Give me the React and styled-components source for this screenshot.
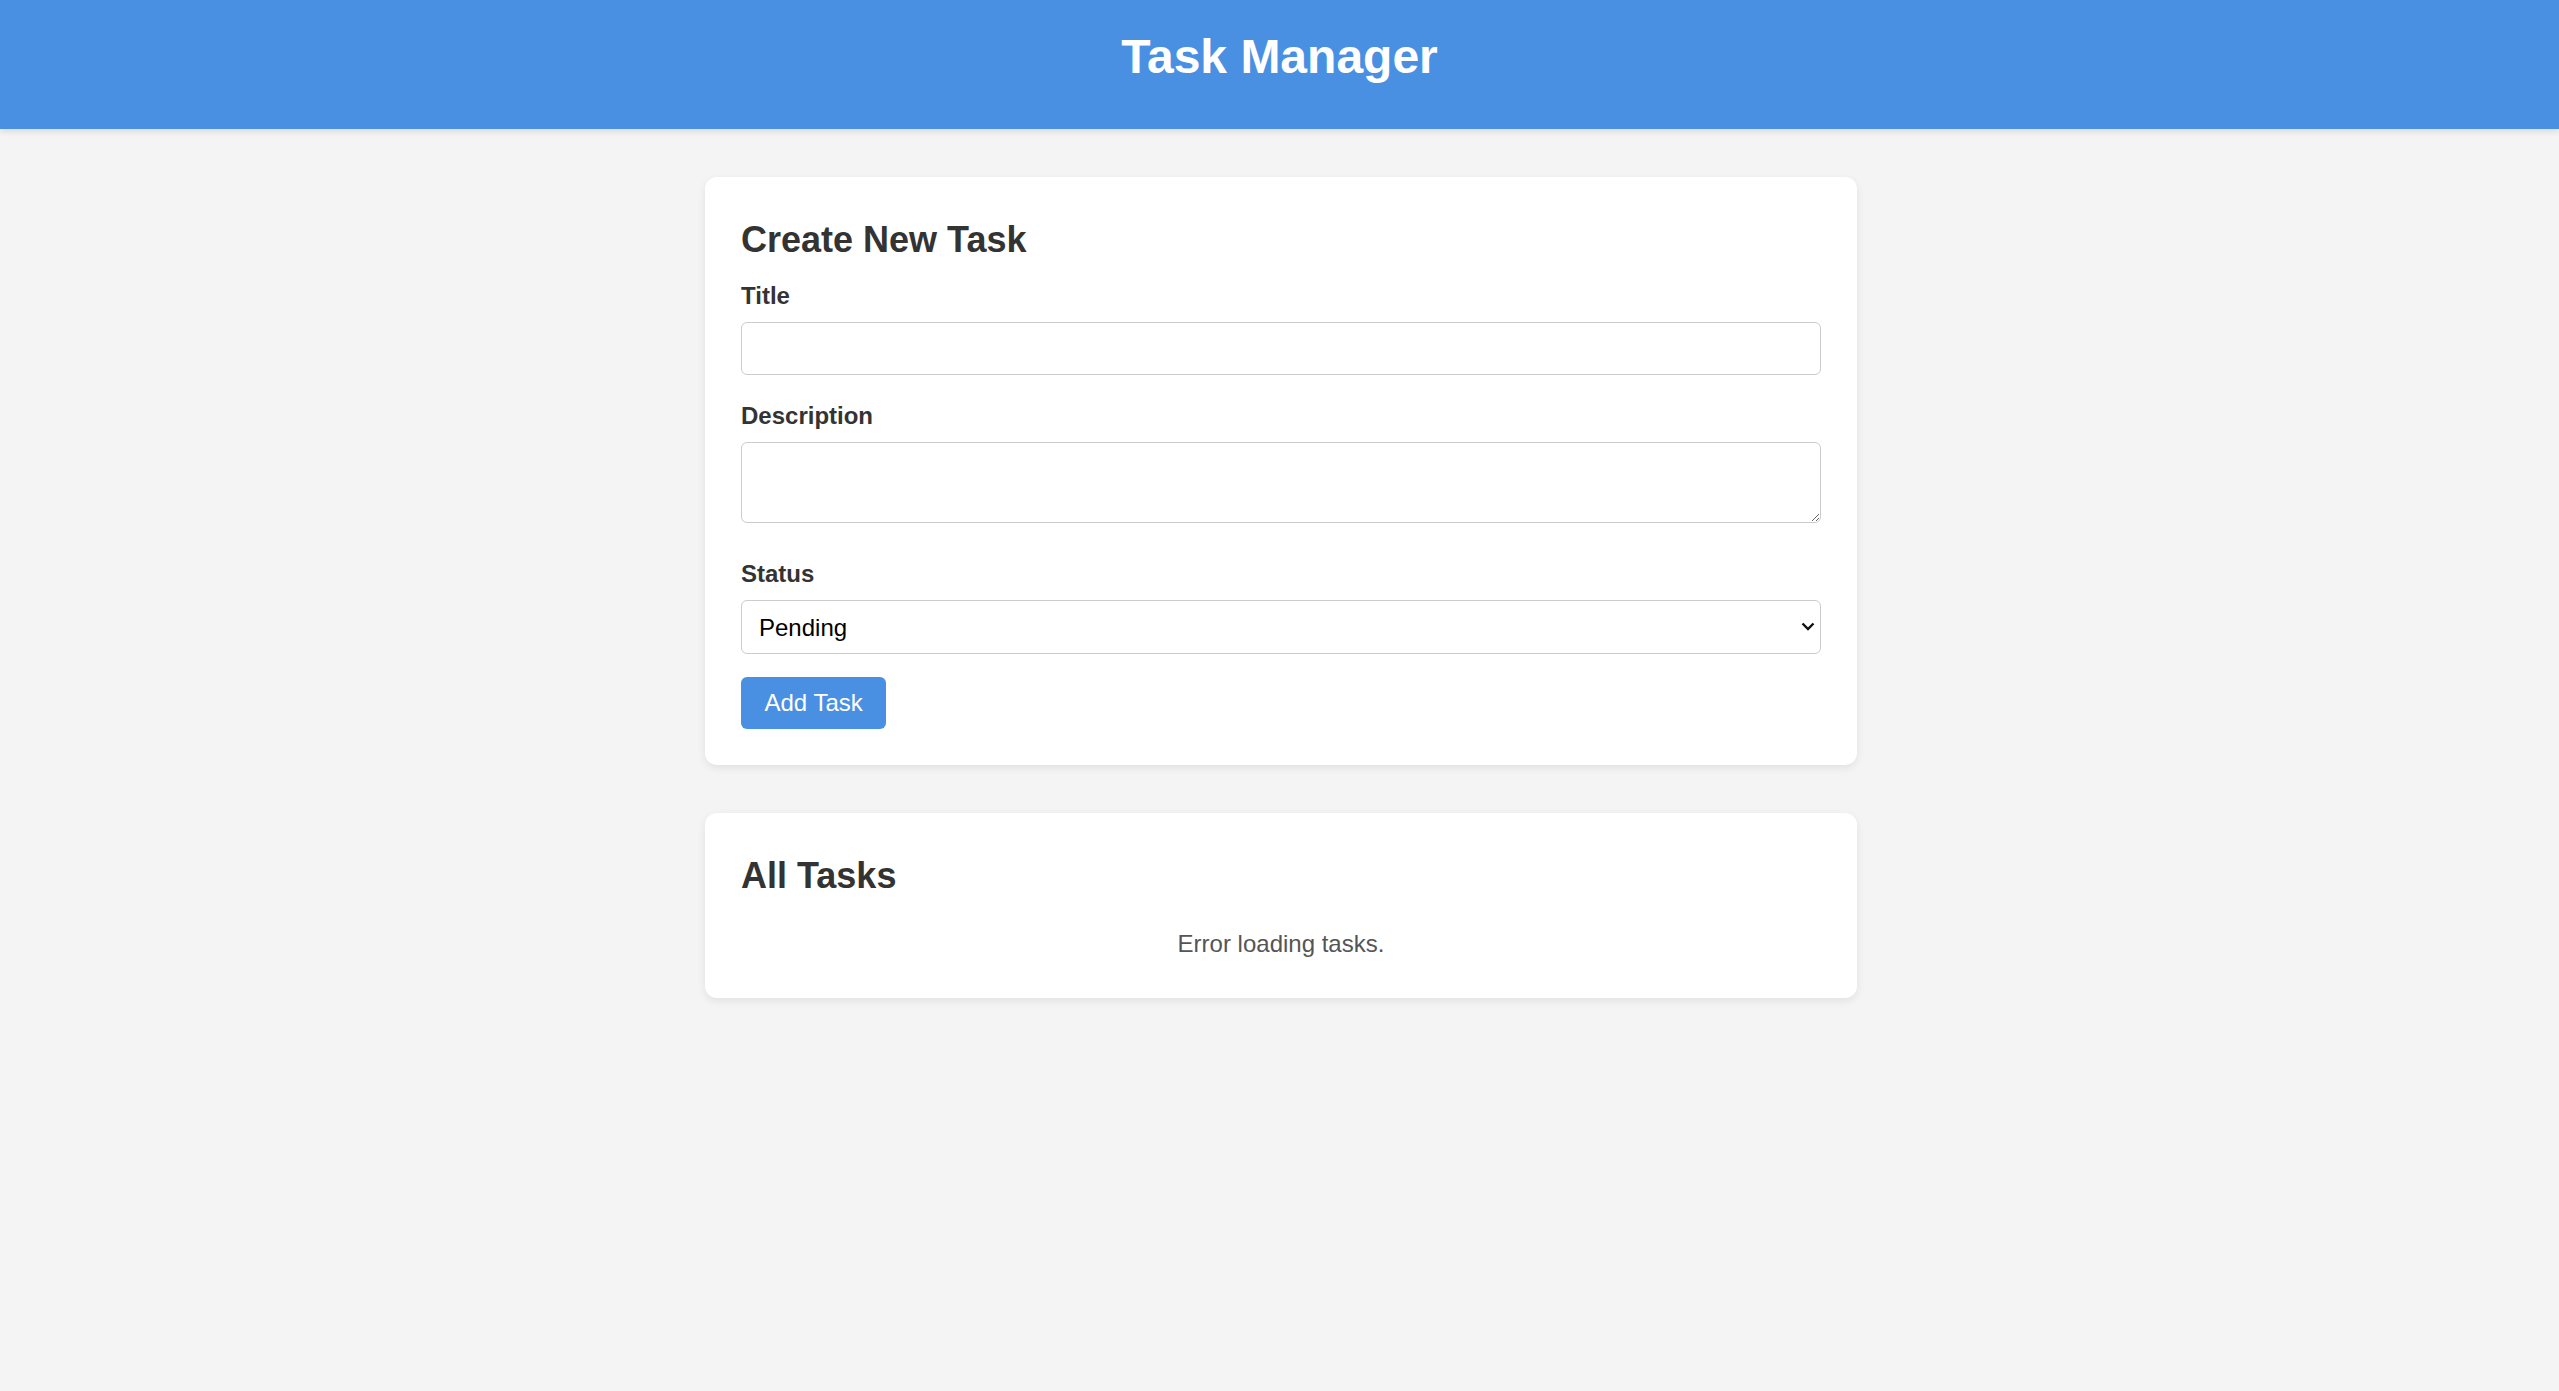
import React, { useState } from "react";
import styled, { createGlobalStyle } from "styled-components";

const GlobalStyle = createGlobalStyle`
  body {
    margin: 0;
    background-color: #f4f4f4;
    font-family: "Liberation Sans", Arial, sans-serif;
    color: #333;
  }
  * {
    box-sizing: border-box;
  }
`;

const App = () => {
  const [title, setTitle] = useState("");
  const [description, setDescription] = useState("");
  const [status, setStatus] = useState("pending");

  const submitHandler = (event) => {
    event.preventDefault();
  };

  return (
    <>
      <GlobalStyle />
      <StyledHeader>
        <h1>Task Manager</h1>
      </StyledHeader>
      <StyledMain>
        <Card>
          <CardTitle>Create New Task</CardTitle>
          <form onSubmit={submitHandler}>
            <Field $gap={27}>
              <Label htmlFor="title">Title</Label>
              <TextInput
                type="text"
                id="title"
                value={title}
                onChange={(e) => setTitle(e.target.value)}
              />
            </Field>
            <Field $gap={37}>
              <Label htmlFor="description">Description</Label>
              <TextArea
                id="description"
                rows={2}
                value={description}
                onChange={(e) => setDescription(e.target.value)}
              />
            </Field>
            <Field $gap={23}>
              <Label htmlFor="status">Status</Label>
              <SelectWrapper>
                <Select
                  id="status"
                  value={status}
                  onChange={(e) => setStatus(e.target.value)}
                >
                  <option value="pending">Pending</option>
                  <option value="in-progress">In Progress</option>
                  <option value="completed">Completed</option>
                </Select>
                <Chevron viewBox="0 0 14 9" aria-hidden="true">
                  <polyline points="1.5,1.5 7,7 12.5,1.5" />
                </Chevron>
              </SelectWrapper>
            </Field>
            <SubmitButton type="submit">Add Task</SubmitButton>
          </form>
        </Card>
        <Card>
          <CardTitle>All Tasks</CardTitle>
          <Message>Error loading tasks.</Message>
        </Card>
      </StyledMain>
    </>
  );
};

const StyledHeader = styled.header`
  background-color: #4a90e2;
  color: #fff;
  text-align: center;
  padding: 29px 0 45px;
  box-shadow: 0 3px 6px rgba(0, 0, 0, 0.1);
  h1 {
    margin: 0;
    font-size: 48px;
    line-height: 55px;
    font-weight: 700;
  }
`;

const StyledMain = styled.main`
  display: flex;
  flex-direction: column;
  align-items: center;
  gap: 48px;
  padding: 48px 0;
`;

const Card = styled.section`
  width: 1152px;
  margin-left: 3px;
  background-color: #fff;
  border-radius: 12px;
  padding: 36px;
  box-shadow: 0 3px 9px rgba(0, 0, 0, 0.08);
`;

const CardTitle = styled.h2`
  margin: 6px 0 22px;
  font-size: 36px;
  line-height: 41px;
  font-weight: 700;
  color: #333;
`;

const Field = styled.div`
  margin-bottom: ${(p) => p.$gap}px;
`;

const Label = styled.label`
  display: block;
  margin-bottom: 12px;
  font-size: 24px;
  line-height: 28px;
  font-weight: 700;
  color: #333;
`;

const TextInput = styled.input`
  display: block;
  width: 100%;
  height: 53px;
  padding: 0 12px;
  font-family: inherit;
  font-size: 24px;
  border: 1px solid #ccc;
  border-radius: 6px;
  background-color: #fff;
  outline: none;
`;

const TextArea = styled.textarea`
  display: block;
  width: 100%;
  height: 81px;
  padding: 12px;
  font-family: inherit;
  font-size: 24px;
  line-height: 27px;
  border: 1px solid #ccc;
  border-radius: 6px;
  background-color: #fff;
  outline: none;
`;

const SelectWrapper = styled.div`
  position: relative;
`;

const Select = styled.select`
  display: block;
  width: 100%;
  height: 54px;
  padding: 0 40px 0 17px;
  font-family: inherit;
  font-size: 24px;
  color: #000;
  border: 1px solid #ccc;
  border-radius: 6px;
  background-color: #fff;
  appearance: none;
  outline: none;
`;

const Chevron = styled.svg`
  position: absolute;
  right: 6px;
  top: 22px;
  width: 14px;
  height: 9px;
  fill: none;
  stroke: #111;
  stroke-width: 2.4;
  pointer-events: none;
`;

const SubmitButton = styled.button`
  display: block;
  height: 52px;
  padding: 0 23.5px;
  font-family: inherit;
  font-size: 24px;
  color: #fff;
  background-color: #4a90e2;
  border: none;
  border-radius: 6px;
  cursor: pointer;
`;

const Message = styled.p`
  margin: 0;
  padding: 12px 0 4px;
  text-align: center;
  font-size: 24px;
  line-height: 28px;
  color: #555;
`;

export default App;
